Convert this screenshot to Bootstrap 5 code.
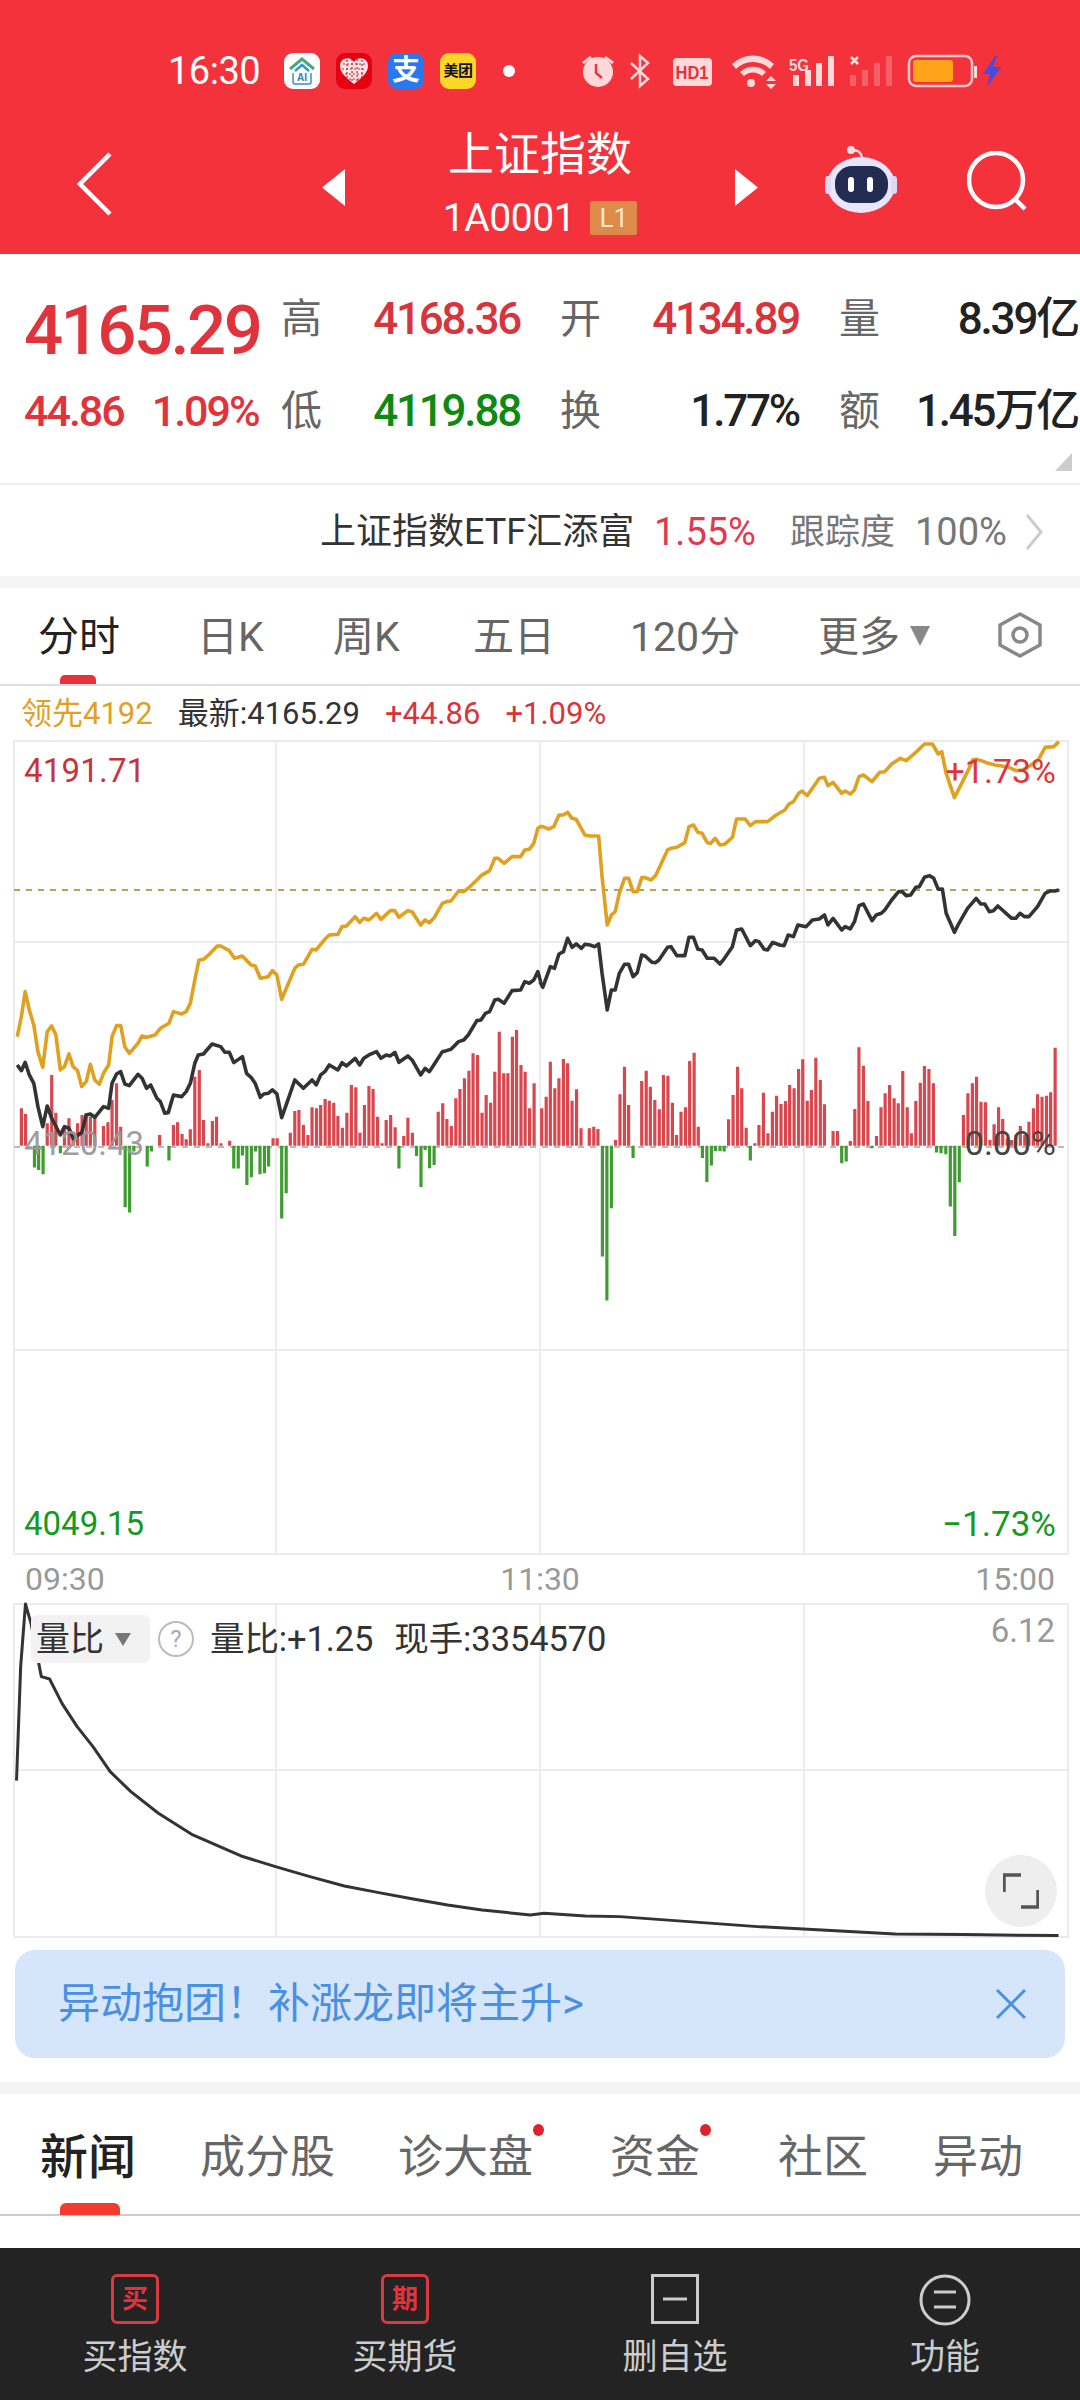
<!DOCTYPE html>
<html lang="zh-CN">
<head>
<meta charset="utf-8">
<title>上证指数</title>
<link href="https://cdn.jsdelivr.net/npm/bootstrap@5.3.0/dist/css/bootstrap.min.css" rel="stylesheet">
<style>
html,body{margin:0;background:#fff}
.app-shell{width:1080px;height:2400px;overflow:hidden;font-family:Roboto,"Noto Sans CJK SC",sans-serif;color:#333;line-height:1}
.hdr{height:254px;background:#f3323b;color:#fff}
.sbar{height:120px;padding-left:168px;padding-top:22px}
.sb-time{width:94px;font-size:38px;color:#fff;letter-spacing:-.5px;margin-right:22px}
.tile{width:36px;height:36px;border-radius:9px;font-weight:700;overflow:hidden}
.tile svg{display:block}
.tile-w{background:#fff}
.tile-r{background:#e60012}
.tile-b{background:#2a78f0;color:#fff;font-size:28px}
.tile-y{background:#ffd625;color:#111;font-size:15px;letter-spacing:-.5px}
.sb-dot{width:12px;height:12px;border-radius:50%;background:#fff;margin-left:27px;margin-right:67px}
.hnav{height:134px;padding-left:77px}
.hnav-back{margin-right:210px;margin-bottom:6px}
.hnav-mid{width:390px;padding-bottom:9px}
.hnav-title{font-size:46px;margin-bottom:19px;height:52px;line-height:52px}
.hnav-code{font-size:39px;letter-spacing:-.4px}
.lv-tag{margin-left:15px;width:47px;height:34px;background:#dd8a4a;color:#ffe9d2;font-size:26px;border-radius:2px}
.hnav-robot{margin-left:67px;margin-right:70px}
.qt{height:231px;border-bottom:2px solid #eee}
.qt-row{padding-left:24px}
.qt-row1{height:125px;padding-top:43px;align-items:flex-start}
.qt-row2{height:70px;padding-top:10px;align-items:flex-start}
.qt-main{width:257px}
.qt-big{font-size:69px;font-weight:500;color:#e0333c;letter-spacing:-2.6px;margin-top:2px;height:64px;line-height:64px}
.qt-sub{font-size:43px;font-weight:500;color:#e0333c;letter-spacing:-2px;height:44px;line-height:44px}
.qt-sub+.qt-sub{margin-left:28px}
.qt-lab{width:42px;font-size:41px;color:#666;height:44px;line-height:44px}
.qt-val{width:197px;text-align:right;font-size:44px;font-weight:500;letter-spacing:-2.2px;height:44px;line-height:44px;color:#222}
.qt-gap{margin-left:40px}
.qt-val.c-up{color:#d8343c}
.qt-val.c-dn{color:#0e8a12}
.c-up{color:#d8343c}
.c-dn{color:#0e8a12}
.qt-cnr{position:absolute;right:8px;top:199px;width:0;height:0;border-left:17px solid transparent;border-bottom:18px solid #ccc}
.etf{height:91px;padding-left:320px;padding-top:3px;font-size:36px}
.etf-name{color:#333;width:334px}
.etf-pct{color:#df3a4e;width:136px;font-size:38px}
.etf-lab{color:#777;width:125px;font-size:35px}
.etf-num{color:#777;width:110px;font-size:38px}
.band{height:12px;background:#f5f5f5}
.ptabs{height:98px;border-bottom:2px solid #ddd;padding-bottom:4px}
.ptab{position:absolute;top:29px;font-size:41px;color:#666;padding:0}
.ptab.on{color:#222}
.ptab-bar{position:absolute;left:60px;top:87px;width:36px;height:9px;background:#e8323a;border-radius:5px 5px 0 0}
.ptab-tri{position:absolute;left:910px;top:38px;width:0;height:0;border:10px solid transparent;border-top:20px solid #888;border-bottom:0}
.ptab-hex{position:absolute;left:996px;top:24px}
.info{height:52px;padding-left:21px;padding-top:2px;font-size:31px;gap:25px}
.info-lead{color:#dfa124}
.chart-wrap{height:818px}
.chart-wrap svg,.vol-wrap svg{display:block}
.ov{position:absolute;font-size:33px;line-height:1}
.ov-hi{left:24px;top:16px;color:#c8323c;letter-spacing:.2px}
.ov-hip{right:24px;top:16px;color:#e0333c;font-size:34px}
.ov-mid{left:24px;top:389px;color:#999;opacity:.95}
.ov-midp{right:24px;top:388px;color:#444;font-size:34px}
.ov-lo{left:24px;top:769px;color:#149a1c;font-size:33px}
.ov-lop{right:24px;top:769px;color:#149a1c;font-size:35px}
.ticks{height:45px;padding:0 25px;font-size:32px;color:#999}
.vol-wrap{height:338px}
.vol-pill{left:31px;top:14px;width:119px;height:48px;background:#f2f2f2;border-radius:6px;padding-left:5px;font-size:34px;color:#333}
.vol-tri{margin-left:11px;width:0;height:0;border:8px solid transparent;border-top:13px solid #777;border-bottom:0}
.vol-q{left:158px;top:20px;width:36px;height:36px;border:2px solid #bbb;border-radius:50%;color:#aaa;font-size:24px}
.vol-txt{left:210px;top:21px;font-size:34.500px;color:#333;letter-spacing:-.1px;word-spacing:2px;white-space:pre}
.vol-max{right:25px;top:13px;color:#999;font-size:33px}
.vol-fs{left:985px;top:254px;width:72px;height:72px;border-radius:50%;background:#eee}
.banner{height:108px;margin:11px 15px 0;background:#d6e6fa;border-radius:20px;padding:0 39px 0 43px;color:#4a90e2;font-size:42px}
.sect-top{margin-top:24px}
.ntabs{height:122px;border-bottom:2px solid #ccc}
.ntab{position:absolute;top:41px;font-size:45px;color:#666;padding:0;letter-spacing:0}
.ntab.on{color:#222;font-size:48px;font-weight:500;top:40px}
.ntab-bar{position:absolute;left:60px;top:109px;width:60px;height:12px;background:#f53a2f;border-radius:6px 6px 0 0}
.ntab-dot{position:absolute;top:30px;width:11px;height:12px;border-radius:50%;background:#e0232b}
.sect-gap{height:32px}
.tbar{height:153px;background:#232323;color:#ccc;font-size:35px}
.tbar-ic{height:50px;margin-top:26px;margin-bottom:16px}
.tbox{width:48px;height:50px;border:3px solid #d93a3f;border-radius:6px;color:#e8303a;font-size:26px;font-weight:700}
.tab-a{left:38px}.tab-b{left:197px}.tab-c{left:333px}.tab-d{left:473px}.tab-e{left:630px}.tab-f{left:818px}
.n-a{left:40px}.n-b{left:200px}.n-c{left:398px}.n-d{left:610px}.n-e{left:778px}.n-f{left:933px}
.d-a{left:533px}.d-b{left:700px}
</style>
</head>
<body>
<div class="app-shell">
  <header class="hdr">
    <div class="sbar d-flex align-items-center">
      <span class="sb-time">16:30</span>
      <div class="d-flex gap-3 align-items-center">
        <div class="tile tile-w">
          <svg width="36" height="36" viewBox="0 0 36 36"><path d="M6 16 18 6l12 10" fill="none" stroke="#4aa878" stroke-width="3"/><path d="M11 18 18 12l7 6" fill="none" stroke="#2f9ad0" stroke-width="2.5"/><path d="M9 20v9a2 2 0 0 0 2 2h14a2 2 0 0 0 2-2v-9" fill="none" stroke="#3f8fc0" stroke-width="1.5"/><text x="18" y="28" text-anchor="middle" font-size="10" font-weight="700" fill="#2f7fb5" font-family="Liberation Sans">AI</text></svg>
        </div>
        <div class="tile tile-r">
          <svg width="36" height="36" viewBox="0 0 36 36"><path d="M18 31C9 24 4 19 4 13a7.500 7.500 0 0 1 14-4 7.500 7.500 0 0 1 14 4c0 6-5 11-14 18z" fill="#fbe6e6"/><path d="M7 11h22M6 16h24M9 21h18M13 26h10M11 7v18M16 6v24M21 6v24M26 7v18" stroke="#c8202c" stroke-width="1.200" stroke-dasharray="2 2"/></svg>
        </div>
        <div class="tile tile-b d-flex align-items-center justify-content-center">支</div>
        <div class="tile tile-y d-flex align-items-center justify-content-center">美团</div>
      </div>
      <span class="sb-dot"></span>
      <svg width="420" height="36" viewBox="583 53 420 36">
        <g fill="#ffd9da">
          <circle cx="599" cy="72" r="15"/>
          <path d="M583 62l8-6 2 2-8 6zM615 62l-8-6-2 2 8 6z"/>
          <path d="M597 64v9l6 5" fill="none" stroke="#f3323b" stroke-width="2.500"/>
          <path d="M632 63l17 16-8 7V56l8 7-17 16" fill="none" stroke="#ffd9da" stroke-width="2.500"/>
          <rect x="674" y="58" width="39" height="28" rx="4"/>
          <path d="M733 64a30 30 0 0 1 42 0l-4 5a24 24 0 0 0-34 0zM741 72a19 19 0 0 1 26 0l-4 4a13 13 0 0 0-18 0z"/>
          <circle cx="752" cy="83" r="4"/>
          <path d="M772 76l5 5h-10zM772 89l5-5h-10z"/>
          <rect x="794" y="75" width="6" height="11"/><rect x="806" y="70" width="6" height="16"/><rect x="817" y="63" width="6" height="23"/><rect x="829" y="56" width="6" height="30"/>
          <g opacity=".28"><rect x="851" y="75" width="6" height="11"/><rect x="863" y="70" width="6" height="16"/><rect x="875" y="63" width="6" height="23"/><rect x="887" y="56" width="6" height="30"/></g>
          <rect x="975" y="66" width="3" height="12"/>
        </g>
        <text x="693" y="79" text-anchor="middle" font-size="19" font-weight="700" fill="#e0333c" font-family="Liberation Sans" textLength="33" lengthAdjust="spacingAndGlyphs">HD1</text>
        <text x="790" y="71" font-size="17" font-weight="700" fill="#ffd9da" font-family="Liberation Sans" textLength="20" lengthAdjust="spacingAndGlyphs">5G</text>
        <path d="M852 57l7 7M859 57l-7 7" stroke="#ffe4e5" stroke-width="2.500"/>
        <rect x="910" y="56" width="63" height="30" rx="7" fill="none" stroke="#ffc9cb" stroke-width="2.500"/>
        <rect x="914" y="60" width="40" height="22" rx="3" fill="#ffa31a"/>
        <path d="M996 56l-12 18h7l-3 13 14-20h-8l4-11z" fill="#4a4ae0"/>
      </svg>
    </div>
    <div class="hnav d-flex align-items-center">
      <svg class="hnav-back" width="35" height="64" viewBox="0 0 35 64"><path d="M33 2 3 32l30 30" fill="none" stroke="#fff" stroke-width="4.500"/></svg>
      <svg width="23" height="37" viewBox="0 0 23 37"><path d="M23 0v37L0 18.500z" fill="#fff"/></svg>
      <div class="hnav-mid text-center">
        <div class="hnav-title">上证指数</div>
        <div class="d-flex align-items-center justify-content-center">
          <span class="hnav-code">1A0001</span>
          <span class="lv-tag d-flex align-items-center justify-content-center">L1</span>
        </div>
      </div>
      <svg width="23" height="37" viewBox="0 0 23 37"><path d="M0 0v37l23-18.500z" fill="#fff"/></svg>
      <svg class="hnav-robot" width="72" height="82" viewBox="825 146 72 82">
        <path d="M852 152c4-3 9-1 10 6" fill="none" stroke="#f3d8e0" stroke-width="2.500"/>
        <circle cx="851" cy="150" r="4" fill="#f3dfe6"/>
        <ellipse cx="861" cy="185" rx="34" ry="28" fill="#e9e6fb"/>
        <rect x="825" y="176" width="6" height="18" rx="3" fill="#dcd8f5"/><rect x="891" y="176" width="6" height="18" rx="3" fill="#dcd8f5"/>
        <rect x="835" y="166" width="53" height="37" rx="17" fill="#222c50"/>
        <rect x="848" y="177" width="6" height="15" rx="3" fill="#fff"/><rect x="867" y="177" width="6" height="15" rx="3" fill="#fff"/>
      </svg>
      <svg width="60" height="72" viewBox="965 151 60 72"><circle cx="994" cy="180" r="27" fill="none" stroke="#fff" stroke-width="4.500"/><path d="M1014 200l9 9" stroke="#fff" stroke-width="4.500"/></svg>
    </div>
  </header>

  <section class="qt position-relative">
    <div class="qt-row qt-row1 d-flex">
      <div class="qt-main"><div class="qt-big">4165.29</div></div>
      <div class="qt-lab">高</div><div class="qt-val c-up">4168.36</div>
      <div class="qt-lab qt-gap">开</div><div class="qt-val c-up">4134.89</div>
      <div class="qt-lab qt-gap">量</div><div class="qt-val">8.39亿</div>
    </div>
    <div class="qt-row qt-row2 d-flex">
      <div class="qt-main d-flex"><span class="qt-sub">44.86</span><span class="qt-sub">1.09%</span></div>
      <div class="qt-lab">低</div><div class="qt-val c-dn">4119.88</div>
      <div class="qt-lab qt-gap">换</div><div class="qt-val">1.77%</div>
      <div class="qt-lab qt-gap">额</div><div class="qt-val">1.45万亿</div>
    </div>
    <span class="qt-cnr"></span>
  </section>

  <section class="etf d-flex align-items-center">
    <span class="etf-name">上证指数ETF汇添富</span>
    <span class="etf-pct">1.55%</span>
    <span class="etf-lab">跟踪度</span>
    <span class="etf-num">100%</span>
    <svg width="18" height="36" viewBox="0 0 18 36"><path d="M2 1l14 17L2 35" fill="none" stroke="#ccc" stroke-width="3"/></svg>
  </section>
  <div class="band"></div>

  <nav class="ptabs nav position-relative">
    <a class="nav-link ptab on tab-a">分时</a>
    <a class="nav-link ptab tab-b">日K</a>
    <a class="nav-link ptab tab-c">周K</a>
    <a class="nav-link ptab tab-d">五日</a>
    <a class="nav-link ptab tab-e">120分</a>
    <a class="nav-link ptab tab-f">更多</a>
    <span class="ptab-tri"></span>
    <span class="ptab-bar"></span>
    <svg class="ptab-hex" width="48" height="46" viewBox="0 0 48 46"><path d="M24 2l20 11v20L24 44 4 33V13z" fill="none" stroke="#888" stroke-width="3.500" stroke-linejoin="round"/><circle cx="24" cy="23" r="7" fill="none" stroke="#888" stroke-width="3.500"/></svg>
  </nav>

  <div class="info d-flex align-items-center">
    <span class="info-lead">领先4192</span>
    <span>最新:4165.29</span>
    <span class="c-up">+44.86</span>
    <span class="c-up">+1.09%</span>
  </div>

  <div class="chart-wrap position-relative">
    <svg width="1080" height="818" viewBox="0 738 1080 818">
      <rect x="14" y="741" width="1054" height="813" fill="none" stroke="#ebebeb" stroke-width="2"/>
      <path d="M276 741V1553M540 741V1553M804 741V1553M14 942H1068M14 1350H1068" stroke="#e8e8e8" stroke-width="1.500"/>
      <path d="M14 890H1060" stroke="#b8a060" stroke-width="2" stroke-dasharray="6 6"/>
      <path d="M14 1147H1068" stroke="#bbb" stroke-width="2" stroke-dasharray="6 6"/>
      <g transform="translate(0 730) scale(.3448 .3333)" fill="none">
        <path vector-effect="non-scaling-stroke" stroke="#d8474e" stroke-width="3.200" d="M62 1247V1135M74 1247V1152M137 1247V1180M150 1247V1035M162 1247V1148M187 1247V1190M200 1247V1165M212 1247V1205M225 1247V1180M238 1247V1155M250 1247V1150M262 1247V1160M275 1247V1160M300 1247V1188M313 1247V1177M325 1247V1110M338 1247V1060M350 1247V1190M463 1247V1215M503 1247V1185M515 1247V1177M528 1247V1212M540 1247V1228M552 1247V1198M565 1247V1040M578 1247V1020M590 1247V1170M603 1247V1240M616 1247V1173M628 1247V1160M641 1247V1240M666 1247V1232M792 1247V1225M804 1247V1225M842 1247V1208M855 1247V1143M867 1247V1140M880 1247V1185M893 1247V1215M905 1247V1132M918 1247V1135M930 1247V1125M943 1247V1107M955 1247V1112M968 1247V1118M980 1247V1158M993 1247V1193M1006 1247V1148M1019 1247V1065M1032 1247V1072M1044 1247V1208M1057 1247V1125M1070 1247V1068M1082 1247V1077M1095 1247V1160M1108 1247V1240M1120 1247V1170M1133 1247V1155M1146 1247V1192M1171 1247V1218M1183 1247V1163M1196 1247V1208M1271 1247V1145M1284 1247V1120M1296 1247V1167M1309 1247V1188M1322 1247V1105M1334 1247V1077M1347 1247V1045M1360 1247V1022M1372 1247V970M1385 1247V975M1398 1247V1148M1410 1247V1095M1423 1247V1118M1435 1247V1025M1448 1247V905M1461 1247V1030M1473 1247V1030M1486 1247V920M1498 1247V900M1511 1247V1005M1523 1247V1025M1536 1247V1135M1549 1247V1060"/>
        <path vector-effect="non-scaling-stroke" stroke="#3f9c30" stroke-width="3.200" d="M100 1247V1313M112 1247V1320M125 1247V1333M175 1247V1270M363 1247V1432M376 1247V1448M388 1247V1265M427 1247V1310M439 1247V1265M490 1247V1292M678 1247V1316M691 1247V1316M703 1247V1277M716 1247V1365M729 1247V1342M741 1247V1265M754 1247V1333M767 1247V1330M779 1247V1310M817 1247V1466M830 1247V1390M1157 1247V1316M1208 1247V1278M1221 1247V1371M1233 1247V1260M1246 1247V1315M1259 1247V1305"/>
        <polyline vector-effect="non-scaling-stroke" stroke="#e0a020" stroke-width="3.600" stroke-linejoin="round" points="50,920 62,860 73,785 85,840 98,885 110,965 124,1012 137,905 150,888 162,915 175,1020 187,1010 200,972 212,1010 225,1022 237,1070 250,1055 262,1003 275,1050 288,1063 300,1030 315,1005 325,920 338,887 350,887 362,950 375,970 400,940 412,918 425,922 450,915 465,895 490,880 503,845 527,852 540,845 552,820 565,750 577,690 590,688 605,675 630,648 640,648 665,662 680,685 703,678 728,705 740,708 755,745 778,740 790,722 803,735 817,808 855,715 865,705 880,703 905,658 917,660 942,628 955,615 980,613 992,590 1005,588 1030,560 1043,577 1055,565 1070,570 1092,550 1105,568 1132,542 1145,542 1157,562 1183,542 1195,545 1220,585 1233,570 1245,578 1258,565 1283,520 1295,515 1308,513 1330,483 1345,485 1358,475 1383,450 1395,437 1420,422 1435,385 1445,385 1462,400 1485,380 1510,380 1522,360 1535,358 1548,340 1560,295 1568,290"/>
        <polyline vector-effect="non-scaling-stroke" stroke="#333" stroke-width="3.600" stroke-linejoin="round" points="50,1005 62,1022 73,997 85,1035 98,1060 110,1130 124,1190 137,1128 150,1165 175,1215 187,1190 200,1195 212,1225 237,1208 250,1155 262,1152 275,1162 300,1130 315,1135 325,1060 338,1032 350,1025 362,1062 375,1067 400,1033 412,1045 425,1075 437,1065 455,1105 465,1115 478,1150 488,1148 503,1095 527,1100 540,1085 552,1060 565,1000 575,975 590,972 615,942 640,950 652,967 665,967 678,998 703,980 715,1030 728,1042 740,1060 755,1102 765,1092 778,1090 790,1080 803,1092 817,1163 830,1125 855,1050 880,1075 905,1050 917,1065 930,1035 942,1025 955,1005 980,1020 992,998 1005,1008 1030,985 1043,1005 1055,985 1070,975 1092,965 1105,985 1120,975 1132,978 1145,967 1157,997 1183,978 1195,990 1220,1035 1233,1015 1245,1025 1258,1005 1283,965 1295,962 1308,958 1330,935 1345,930 1358,915 1383,872 1395,870 1408,850 1420,845 1435,810 1445,808 1462,820 1485,782 1510,780 1522,755 1535,760 1548,750 1560,725 1568,755"/>
      </g>
      <g transform="translate(540 730) scale(.3448 .3333)" fill="none">
        <path vector-effect="non-scaling-stroke" stroke="#d8474e" stroke-width="3.200" d="M5 1247V1135M18 1247V1100M30 1247V995M43 1247V1075M55 1247V1045M68 1247V987M80 1247V1000M93 1247V1112M106 1247V1078M119 1247V1195M143 1247V1195M156 1247V1190M168 1247V1197M219 1247V1230M232 1247V1093M245 1247V1010M257 1247V1125M295 1247V1053M308 1247V1022M320 1247V1070M333 1247V1110M346 1247V1138M358 1247V1035M371 1247V1037M384 1247V1118M396 1247V1215M409 1247V1145M422 1247V1132M434 1247V993M447 1247V968M459 1247V1190M547 1247V1168M560 1247V1095M573 1247V1010M585 1247V1075M598 1247V1193M623 1247V1240M635 1247V1185M648 1247V1088M661 1247V1210M674 1247V1145M686 1247V1097M699 1247V1122M712 1247V1113M724 1247V1065M737 1247V1075M750 1247V1017M762 1247V988M775 1247V1112M787 1247V1080M800 1247V983M813 1247V1050M825 1247V1123M850 1247V1203M863 1247V1203M900 1247V1233M913 1247V1137M925 1247V952M938 1247V1007M951 1247V1113M976 1247V1218M989 1247V1132M1001 1247V1090M1014 1247V1065M1027 1247V1105M1039 1247V1120M1052 1247V1023M1065 1247V1132M1077 1247V1210M1090 1247V1113M1103 1247V1058M1115 1247V1008M1128 1247V1017M1141 1247V1060M1228 1247V1155M1241 1247V1090M1254 1247V1060M1266 1247V1040M1279 1247V1115M1292 1247V1117M1305 1247V1230M1317 1247V1183M1330 1247V1132M1342 1247V1167M1355 1247V1225M1368 1247V1230M1380 1247V1215M1393 1247V1188M1406 1247V1215M1418 1247V1175M1431 1247V1135M1443 1247V1093M1456 1247V1100M1469 1247V1097M1481 1247V1087M1494 1247V953"/>
        <path vector-effect="non-scaling-stroke" stroke="#3f9c30" stroke-width="3.200" d="M181 1247V1580M194 1247V1712M207 1247V1435M270 1247V1284M471 1247V1284M484 1247V1356M497 1247V1307M509 1247V1263M522 1247V1263M534 1247V1265M610 1247V1292M875 1247V1300M888 1247V1295M963 1247V1255M1150 1247V1268M1163 1247V1270M1177 1247V1273M1190 1247V1430M1203 1247V1518M1216 1247V1357"/>
        <polyline vector-effect="non-scaling-stroke" stroke="#e0a020" stroke-width="3.600" stroke-linejoin="round" points="0,290 8,290 25,297 40,290 55,255 68,255 80,247 93,265 105,268 130,315 145,318 170,318 180,440 195,585 207,555 218,545 230,490 245,445 257,445 270,485 282,485 295,443 305,443 322,450 335,437 370,360 380,355 397,352 420,338 432,290 445,285 458,307 470,310 485,338 495,340 508,325 522,345 535,343 558,322 570,267 595,267 610,287 625,275 660,275 685,255 710,240 722,222 735,215 750,190 760,183 775,197 790,175 810,145 825,142 835,167 850,157 875,190 885,183 900,192 912,180 925,140 938,135 963,155 985,127 1000,125 1020,102 1045,85 1062,92 1090,67 1115,42 1138,42 1155,72 1165,65 1178,130 1202,203 1240,125 1255,90 1265,88 1280,92 1300,100 1320,105 1340,108 1360,112 1380,122 1400,120 1420,108 1445,90 1465,52 1490,50 1505,35"/>
        <polyline vector-effect="non-scaling-stroke" stroke="#333" stroke-width="3.600" stroke-linejoin="round" points="0,755 8,772 30,710 42,715 55,672 68,665 80,625 93,652 105,642 120,655 130,643 145,645 158,650 170,642 180,730 195,840 207,780 218,780 230,730 245,703 257,703 270,740 282,728 295,675 305,678 325,697 335,698 345,690 370,652 380,650 397,677 420,677 432,622 445,622 458,658 470,660 485,685 505,685 522,702 535,685 558,650 570,600 585,597 610,647 625,632 635,635 650,658 660,660 675,637 695,645 708,647 720,615 735,620 748,585 772,590 790,570 810,567 825,555 835,585 850,565 875,600 885,590 900,597 912,575 925,527 938,522 963,572 975,555 990,550 1000,540 1020,510 1040,485 1050,485 1062,497 1075,495 1090,472 1100,470 1115,442 1130,437 1142,445 1155,478 1167,477 1178,550 1202,607 1215,580 1240,535 1265,505 1278,522 1290,522 1303,545 1315,542 1328,528 1368,565 1380,565 1392,550 1405,560 1418,560 1443,530 1465,490 1480,483 1493,483 1505,480"/>
      </g>
    </svg>
    <span class="ov ov-hi">4191.71</span>
    <span class="ov ov-hip">+1.73%</span>
    <span class="ov ov-mid">4120.43</span>
    <span class="ov ov-midp">0.00%</span>
    <span class="ov ov-lo">4049.15</span>
    <span class="ov ov-lop">−1.73%</span>
  </div>

  <div class="ticks d-flex align-items-center justify-content-between"><span>09:30</span><span>11:30</span><span>15:00</span></div>

  <div class="vol-wrap position-relative">
    <svg width="1080" height="338" viewBox="0 1601 1080 338">
      <rect x="14" y="1604" width="1054" height="333" fill="none" stroke="#ebebeb" stroke-width="2"/>
      <path d="M276 1604V1937M540 1604V1937M804 1604V1937M14 1770H1068" stroke="#e8e8e8" stroke-width="1.500"/>
      <g transform="translate(0 1500) scale(.6887 .3333)">
        <polyline vector-effect="non-scaling-stroke" fill="none" stroke="#333" stroke-width="3" stroke-linejoin="round" points="24,842 30,500 37,312 45,370 60,530 72,537 90,610 112,680 135,740 160,815 190,875 230,940 280,1005 350,1068 400,1100 450,1130 500,1158 550,1178 600,1197 650,1215 700,1230 770,1245 790,1240 850,1248 900,1250 1000,1265 1100,1280 1200,1291 1300,1302 1400,1304 1537,1307"/>
      </g>
    </svg>
    <div class="ov vol-pill d-flex align-items-center"><span>量比</span><span class="vol-tri"></span></div>
    <div class="ov vol-q d-flex align-items-center justify-content-center">?</div>
    <span class="ov vol-txt">量比:+1.25  现手:3354570</span>
    <span class="ov vol-max">6.12</span>
    <div class="ov vol-fs d-flex align-items-center justify-content-center">
      <svg width="36" height="36" viewBox="0 0 36 36"><path d="M1 19V2h17M35 17v17H18" fill="none" stroke="#555" stroke-width="3.500"/></svg>
    </div>
  </div>

  <div class="banner d-flex align-items-center justify-content-between">
    <span>异动抱团！补涨龙即将主升&gt;</span>
    <svg width="30" height="30" viewBox="0 0 30 30"><path d="M1 1l28 28M29 1 1 29" stroke="#4a90e2" stroke-width="3"/></svg>
  </div>

  <div class="band sect-top"></div>
  <nav class="ntabs nav position-relative">
    <a class="nav-link ntab on n-a">新闻</a>
    <a class="nav-link ntab n-b">成分股</a>
    <a class="nav-link ntab n-c">诊大盘</a>
    <span class="ntab-dot d-a"></span>
    <a class="nav-link ntab n-d">资金</a>
    <span class="ntab-dot d-b"></span>
    <a class="nav-link ntab n-e">社区</a>
    <a class="nav-link ntab n-f">异动</a>
    <span class="ntab-bar"></span>
  </nav>
  <div class="sect-gap"></div>

  <footer class="tbar row g-0 text-center">
    <div class="col-3">
      <div class="tbar-ic d-flex justify-content-center"><span class="tbox d-flex align-items-center justify-content-center">买</span></div>买指数
    </div>
    <div class="col-3">
      <div class="tbar-ic d-flex justify-content-center"><span class="tbox d-flex align-items-center justify-content-center">期</span></div>买期货
    </div>
    <div class="col-3">
      <div class="tbar-ic d-flex justify-content-center"><svg width="48" height="50" viewBox="0 0 48 50"><rect x="1.500" y="1.500" width="45" height="47" fill="none" stroke="#ccc" stroke-width="3"/><path d="M12 25h24" stroke="#ccc" stroke-width="3"/></svg></div>删自选
    </div>
    <div class="col-3">
      <div class="tbar-ic d-flex justify-content-center"><svg width="52" height="52" viewBox="0 0 52 52"><circle cx="26" cy="26" r="24" fill="none" stroke="#ccc" stroke-width="3"/><path d="M15 18h22M15 33h22" stroke="#ccc" stroke-width="3"/></svg></div>功能
    </div>
  </footer>
</div>
</body>
</html>
